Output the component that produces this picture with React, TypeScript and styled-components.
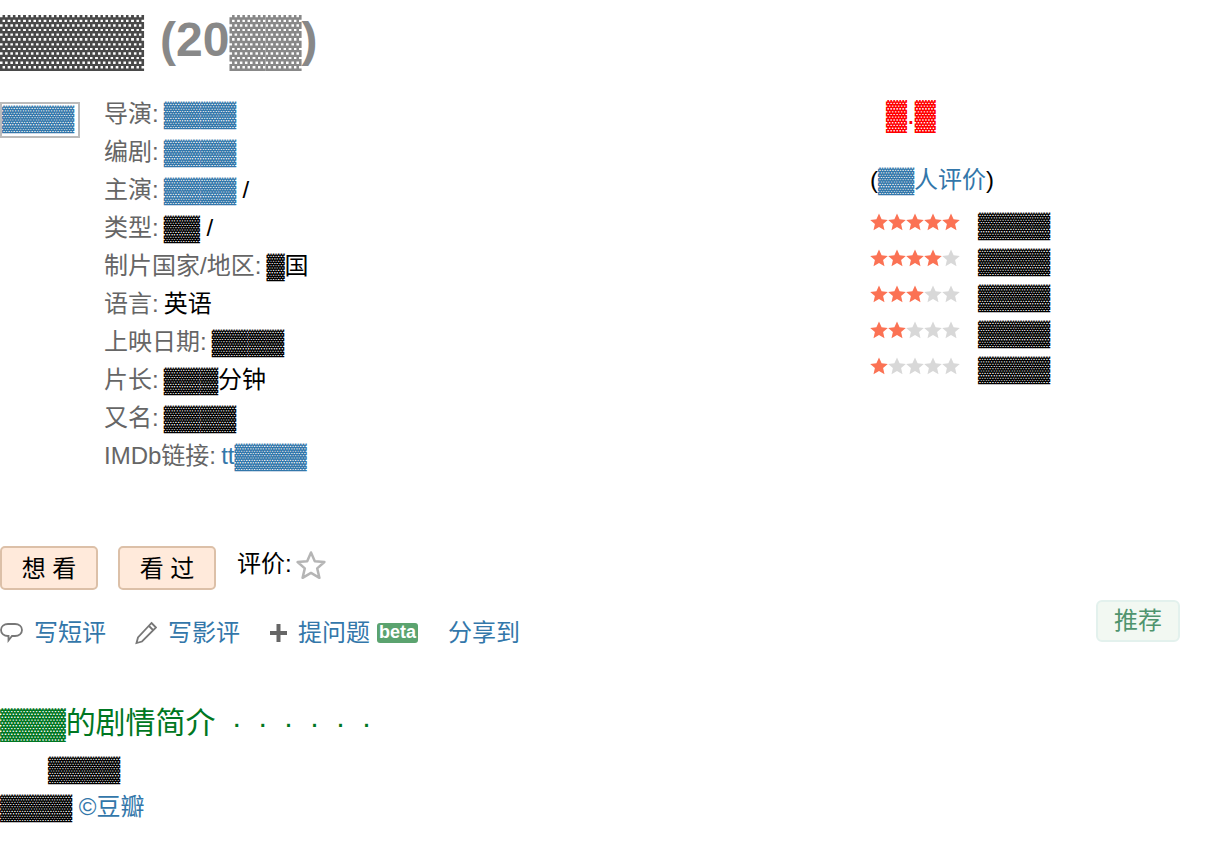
import React from 'react'
import styled, { createGlobalStyle } from 'styled-components'

const GlobalStyle = createGlobalStyle`
  body {
    margin: 0;
    background: #fff;
    color: #000;
    font-family: "Liberation Sans", "Noto Sans CJK SC", sans-serif;
    font-size: 24px;
    line-height: 38px;
  }
`

const Page = styled.div`
  width: 1210px;
`

const Redacted = styled.span`
  font-family: "Liberation Sans", sans-serif;
  font-size: 1.03em;
  font-weight: normal;
  line-height: 0;
`

const Title = styled.h1`
  margin: 0 0 15px;
  font-size: 48px;
  line-height: 80px;
  font-weight: bold;
  word-spacing: 2.5px;
  color: #494949;
`

const Year = styled.span`
  color: #888;
`

const Top = styled.div`
  display: flex;
  height: 451px;
`

const PosterCol = styled.div`
  flex: 0 0 104px;
  padding-top: 7px;
`

const Poster = styled.a`
  display: block;
  box-sizing: border-box;
  width: 80px;
  height: 36px;
  border: 2px solid #bbb;
  color: #37a;
  line-height: 28px;
  overflow: hidden;
`

const Info = styled.div`
  flex: 0 0 766px;
`

const Line = styled.div`
  height: 38px;
`

const Label = styled.span`
  margin-right: -1.5px;
  color: #666;
`

const Link = styled.a`
  color: #37a;
`

const RatingCol = styled.div`
  flex: 1;
`

const Score = styled.div`
  padding-left: 16px;
  font-size: 28px;
  line-height: 40px;
  color: #f00;
  margin-bottom: 26px;
`

const Count = styled.div`
  height: 38px;
  margin-bottom: 5px;
`

const StarRow = styled.div`
  display: flex;
  align-items: center;
  gap: 18px;
  height: 36px;
`

const Stars = styled.div`
  display: flex;
  width: 90px;
`

const Votes = styled.div`
  margin-top: 6px;
`

const Actions = styled.div`
  display: flex;
  align-items: flex-start;
`

const MarkButton = styled.button`
  box-sizing: border-box;
  width: 98px;
  height: 44px;
  margin-right: 20px;
  padding: 0;
  border: 2px solid #dcc0a8;
  border-radius: 5px;
  background: #ffeadb;
  color: #000;
  font: inherit;
  line-height: 42px;
`

const RateLabel = styled.div`
  display: flex;
  align-items: flex-start;
  margin-left: 1px;
  line-height: 36px;
`

const RateStar = styled.svg`
  width: 30px;
  height: 30px;
  margin: 4px 0 0 4px;
`

const Tools = styled.div`
  display: flex;
  align-items: flex-start;
  justify-content: space-between;
  height: 56px;
  margin-top: 10px;
  padding-right: 30px;
`

const ToolList = styled.div`
  display: flex;
  align-items: center;
  padding-top: 14px;
`

const Tool = styled.div<{ $gap: number }>`
  display: flex;
  align-items: center;
  margin-right: ${p => p.$gap}px;
`

const ToolIcon = styled.svg<{ $w: number }>`
  width: ${p => p.$w}px;
  height: 24px;
  margin-right: 11px;
`

const Beta = styled.span`
  width: 41px;
  height: 20px;
  margin-left: 7px;
  border-radius: 3px;
  background: #5ba36f;
  color: #fff;
  font-size: 18px;
  font-weight: bold;
  line-height: 19px;
  text-align: center;
`

const Recommend = styled.button`
  box-sizing: border-box;
  width: 84px;
  height: 42px;
  padding: 0;
  border: 2px solid #e3f1ed;
  border-radius: 6px;
  background: #f2f8f2;
  color: #4f946e;
  font: inherit;
  line-height: 36px;
`

const Heading = styled.h2`
  margin: 42px 0 0;
  font-size: 30px;
  line-height: 50px;
  font-weight: normal;
  color: #072;

  ${Redacted} {
    font-size: 1em;
  }
`

const Dots = styled.span`
  margin-left: 4px;
  letter-spacing: 3.8px;
`

const Summary = styled.div`
  margin-top: 2px;
`

const Indented = styled.div`
  padding-left: 48px;
`

const STAR = 'M9 .6 11.6 6.2 17.8 6.9 13.1 11.1 14.500 17.2 9 14 3.500 17.2 4.900 11.1 .2 6.9 6.4 6.2Z'

const Star = ({ on }: { on: boolean }) => (
  <svg width="18" height="18" viewBox="0 0 18 18">
    <path d={STAR} fill={on ? '#fb7254' : '#d8d8d8'} />
  </svg>
)

const App = () => {
  return (
    <Page>
      <GlobalStyle />
      <Title>
        <Redacted>▓▓▓▓</Redacted> <Year>(20<Redacted>▓▓</Redacted>)</Year>
      </Title>
      <Top>
        <PosterCol>
          <Poster><Redacted>▓▓▓▓</Redacted></Poster>
        </PosterCol>
        <Info>
          <Line><Label>导演:</Label> <Link><Redacted>▓▓▓▓</Redacted></Link></Line>
          <Line><Label>编剧:</Label> <Link><Redacted>▓▓▓▓</Redacted></Link></Line>
          <Line><Label>主演:</Label> <Link><Redacted>▓▓▓▓</Redacted></Link> /</Line>
          <Line><Label>类型:</Label> <Redacted>▓▓</Redacted> /</Line>
          <Line><Label>制片国家/地区:</Label> <Redacted>▓</Redacted>国</Line>
          <Line><Label>语言:</Label> 英语</Line>
          <Line><Label>上映日期:</Label> <Redacted>▓▓▓▓</Redacted></Line>
          <Line><Label>片长:</Label> <Redacted>▓▓▓</Redacted>分钟</Line>
          <Line><Label>又名:</Label> <Redacted>▓▓▓▓</Redacted></Line>
          <Line><Label>IMDb链接:</Label> <Link>tt<Redacted>▓▓▓▓</Redacted></Link></Line>
        </Info>
        <RatingCol>
          <Score><Redacted>▓</Redacted>.<Redacted>▓</Redacted></Score>
          <Count>(<Link><Redacted>▓▓</Redacted>人评价</Link>)</Count>
          {[5, 4, 3, 2, 1].map(n => (
            <StarRow key={n}>
              <Stars>
                {[1, 2, 3, 4, 5].map(i => <Star key={i} on={i <= n} />)}
              </Stars>
              <Votes><Redacted>▓▓▓▓</Redacted></Votes>
            </StarRow>
          ))}
        </RatingCol>
      </Top>
      <Actions>
        <MarkButton>想 看</MarkButton>
        <MarkButton>看 过</MarkButton>
        <RateLabel>
          评价:
          <RateStar viewBox="0 0 30 30">
            <path d="M15 2.500 18.800 11.200 28.400 12 21.200 18.400 23.400 27.800 15 22.900 6.600 27.800 8.800 18.400 1.600 12 11.200 11.200Z" fill="#fff" stroke="#b5b5b5" strokeWidth="2.500" strokeLinejoin="round" />
          </RateStar>
        </RateLabel>
      </Actions>
      <Tools>
        <ToolList>
          <Tool $gap={29}>
            <ToolIcon $w={23} viewBox="0 0 23 24">
              <path d="M8 3h7c4 0 7 2.500 7 6s-3 6-7 6h-3l-3.500 4.500V15H8c-4 0-7-2.500-7-6s3-6 7-6Z" fill="none" stroke="#777" strokeWidth="1.800" />
            </ToolIcon>
            <Link>写短评</Link>
          </Tool>
          <Tool $gap={30}>
            <ToolIcon $w={22} viewBox="0 0 22 24">
              <path d="M16.500 2l4.500 4.500L7 20.500l-5.500 1.500L3 16.500 16.500 2ZM14 5l4.500 4.500" fill="none" stroke="#777" strokeWidth="1.800" />
            </ToolIcon>
            <Link>写影评</Link>
          </Tool>
          <Tool $gap={0}>
            <ToolIcon $w={17} viewBox="0 0 17 24">
              <path d="M6.500 3h4v7h6.500v4h-6.500v7h-4v-7H0v-4h6.500Z" fill="#666" />
            </ToolIcon>
            <Link>提问题</Link>
          </Tool>
          <Tool $gap={30}><Beta>beta</Beta></Tool>
          <Link>分享到</Link>
        </ToolList>
        <Recommend>推荐</Recommend>
      </Tools>
      <Heading>
        <Redacted>▓▓▓</Redacted>的剧情简介<Dots> · · · · · ·</Dots>
      </Heading>
      <Summary>
        <Indented><Redacted>▓▓▓▓</Redacted></Indented>
        <div><Redacted>▓▓▓▓</Redacted> <Link>©豆瓣</Link></div>
      </Summary>
    </Page>
  )
}

export default App
